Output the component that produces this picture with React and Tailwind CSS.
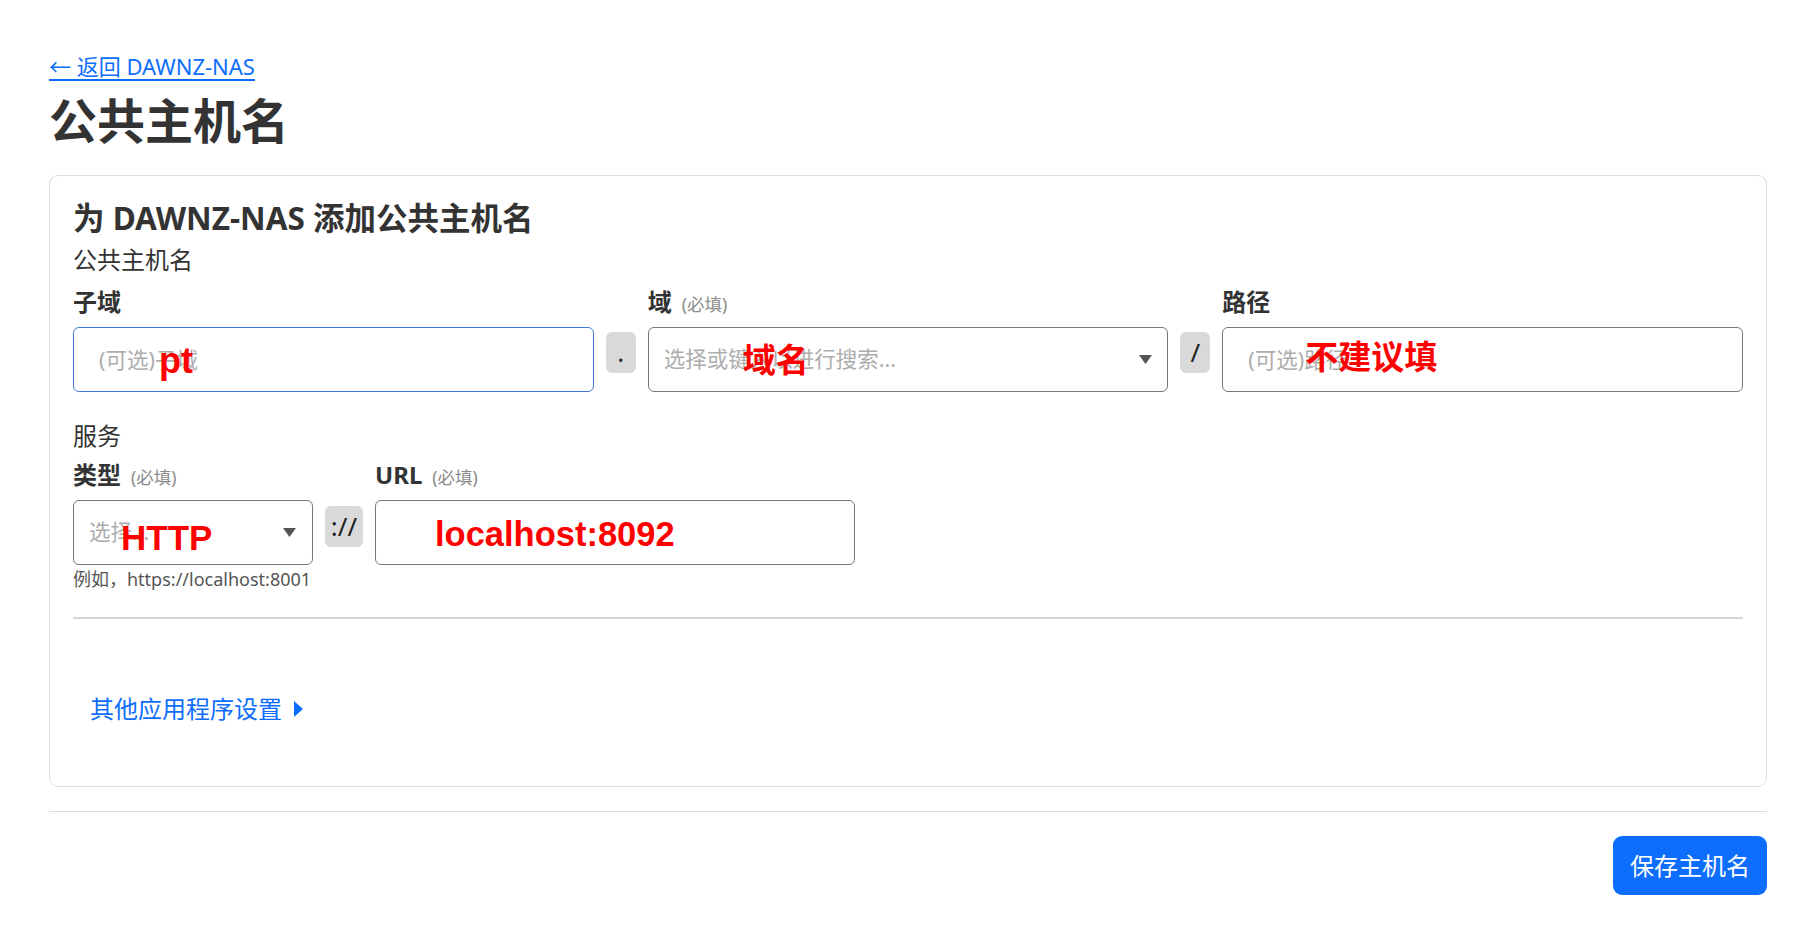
import React from 'react';

function Caret() {
  return (
    <svg width="13" height="9" viewBox="0 0 13 9" className="shrink-0">
      <path d="M0 0h13L6.5 9z" fill="#555" />
    </svg>
  );
}

function Pill({ children, className = '' }) {
  return (
    <div className={`flex h-[41px] shrink-0 items-center justify-center rounded-[6px] bg-[#d9d9d9] text-[26px] text-[#222] ${className}`}>
      {children}
    </div>
  );
}

function Label({ text, required }) {
  return (
    <div className="flex items-baseline">
      <span className="text-[24px] font-bold leading-[36px] text-[#333]">{text}</span>
      {required && <span className="ml-[10px] text-[17.5px] text-[#8a8a8a]">(必填)</span>}
    </div>
  );
}

function Mark({ children, className = '' }) {
  return (
    <span className={`pointer-events-none absolute whitespace-nowrap font-bold leading-none text-[#ff0000] ${className}`}>
      {children}
    </span>
  );
}

export default function App() {
  return (
    <div className="min-h-screen bg-white px-[49px] pt-[50px] text-[#333] font-['Noto_Sans','Noto_Sans_CJK_SC',sans-serif]">
      <a href="#" className="block w-fit text-[22px] leading-[32px] text-[#0d6efd] underline underline-offset-[4px]">
        ← 返回 DAWNZ-NAS
      </a>
      <h1 className="mt-[10px] text-[48px] font-bold leading-[58px] text-[#333]">公共主机名</h1>

      <section className="mt-[25px] rounded-[9px] border border-[#dcdcdc] px-[23px] pt-[24px] pb-[59px]">
        <h5 className="text-[31.5px] font-bold leading-[36px] text-[#333]">为 DAWNZ-NAS 添加公共主机名</h5>
        <div className="mt-[6px] text-[24px] leading-[36px]">公共主机名</div>

        {/* hostname row */}
        <div className="mt-[6px] flex items-end gap-3">
          <div className="min-w-0 flex-1">
            <Label text="子域" />
            <div className="relative mt-[7px]">
              <input
                className="h-[65px] w-full rounded-[6px] border border-[#4279d6] bg-white pl-[25px] text-[21.5px] outline-none placeholder:text-[#adadad]"
                placeholder="(可选)子域"
              />
              <Mark className="left-[86px] top-[16px] text-[36px] font-['Liberation_Sans',sans-serif]">pt</Mark>
            </div>
          </div>
          <Pill className="mb-[19px] w-[30px]">.</Pill>
          <div className="min-w-0 flex-1">
            <Label text="域" required />
            <div className="relative mt-[7px] flex h-[65px] items-center justify-between rounded-[6px] border border-[#777] pl-[15px] pr-[15px]">
              <span className="text-[21.5px] text-[#adadad]">选择或键入以进行搜索...</span>
              <Caret />
              <Mark className="left-[94px] top-[14px] text-[33px] font-['Noto_Sans_CJK_SC',sans-serif]">域名</Mark>
            </div>
          </div>
          <Pill className="mb-[19px] w-[30px]">/</Pill>
          <div className="min-w-0 flex-1">
            <Label text="路径" />
            <div className="relative mt-[7px]">
              <input
                className="h-[65px] w-full rounded-[6px] border border-[#777] bg-white pl-[25px] text-[21.5px] outline-none placeholder:text-[#adadad]"
                placeholder="(可选)路径"
              />
              <Mark className="left-[83px] top-[12px] text-[33px] font-['Noto_Sans_CJK_SC',sans-serif]">不建议填</Mark>
            </div>
          </div>
        </div>

        {/* service */}
        <div className="mt-[26px] text-[24px] leading-[36px]">服务</div>
        <div className="mt-[3px] flex items-end gap-3">
          <div className="w-[240px] shrink-0">
            <Label text="类型" required />
            <div className="relative mt-[7px] flex h-[65px] items-center justify-between rounded-[6px] border border-[#777] pl-[15px] pr-[16px]">
              <span className="text-[21.5px] text-[#adadad]">选择...</span>
              <Caret />
              <Mark className="left-[47px] top-[19px] text-[35px] font-['Liberation_Sans',sans-serif]">HTTP</Mark>
            </div>
          </div>
          <Pill className="mb-[18px] w-[38px]">://</Pill>
          <div className="w-[480px] shrink-0">
            <Label text="URL" required />
            <div className="relative mt-[7px]">
              <input className="h-[65px] w-full rounded-[6px] border border-[#777] bg-white px-[24px] text-[21px] outline-none" />
              <Mark className="left-[60px] top-[17px] text-[34.5px] font-['Liberation_Sans',sans-serif]">localhost:8092</Mark>
            </div>
          </div>
        </div>
        <div className="mt-[2px] text-[18px] leading-[25px] text-[#555]">例如，https://localhost:8001</div>

        <div className="mt-[25px] h-[2px] bg-[#d6d6d6]" />

        <button className="ml-[17px] mt-[72px] flex items-center gap-[12px] text-[24px] leading-[36px] text-[#0d6efd]">
          其他应用程序设置
          <svg width="9" height="16" viewBox="0 0 9 16">
            <path d="M0 0l9 8-9 8z" fill="#0d6efd" />
          </svg>
        </button>
      </section>

      <div className="mt-[24px] h-px bg-[#dcdcdc]" />
      <div className="mt-[24px] flex justify-end">
        <button className="h-[59px] rounded-[9px] bg-[#0d6efd] px-[17px] text-[24px] text-white">保存主机名</button>
      </div>
    </div>
  );
}
